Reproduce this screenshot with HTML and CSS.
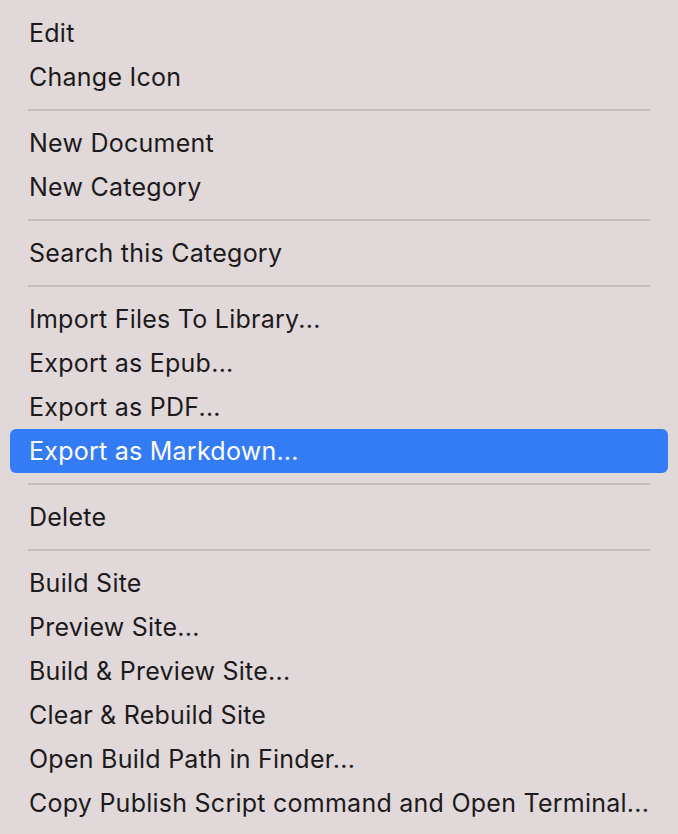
FILE: index.html
```html
<!DOCTYPE html>
<html>
<head>
<meta charset="utf-8">
<link rel="stylesheet" href="styles.css">
</head>
<body>
<div class="menu">
  <div class="item">Edit</div>
  <div class="item">Change Icon</div>
  <div class="sep"></div>
  <div class="item">New Document</div>
  <div class="item">New Category</div>
  <div class="sep"></div>
  <div class="item">Search this Category</div>
  <div class="sep"></div>
  <div class="item">Import Files To Library...</div>
  <div class="item">Export as Epub...</div>
  <div class="item">Export as PDF...</div>
  <div class="item active">Export as Markdown...</div>
  <div class="sep"></div>
  <div class="item">Delete</div>
  <div class="sep"></div>
  <div class="item">Build Site</div>
  <div class="item">Preview Site...</div>
  <div class="item">Build &amp; Preview Site...</div>
  <div class="item">Clear &amp; Rebuild Site</div>
  <div class="item">Open Build Path in Finder...</div>
  <div class="item">Copy Publish Script command and Open Terminal...</div>
</div>
</body>
</html>
```

FILE: styles.css
```css
html, body {
  margin: 0;
  padding: 0;
  background: #e0d8d9;
}
.menu {
  width: 678px;
  height: 834px;
  box-sizing: border-box;
  padding: 11px 10px 9px 10px;
  display: flex;
  flex-direction: column;
  background: #e0d8d9;
  font-family: "Inter", "Liberation Sans", sans-serif;
  font-size: 25px;
  letter-spacing: 0.25px;
  color: #1d1a1b;
}
.item {
  height: 44px;
  line-height: 44px;
  padding-left: 19px;
  border-radius: 6px;
  white-space: nowrap;
}
.item.active {
  background: #347cf6;
  color: #ffffff;
}
.sep {
  height: 22px;
  display: flex;
  align-items: center;
  padding: 0 18px;
}
.sep::before {
  content: "";
  flex: 1;
  height: 2px;
  background: #c4bcbd;
}
```
